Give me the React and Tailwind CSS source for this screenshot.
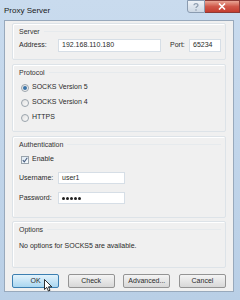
import React from 'react';

const font = { fontFamily: '"Liberation Sans", Arial, sans-serif' };

const Group = ({ title, className = '', children }) => (
  <div className={`mx-[7px] border border-[#dde3e8] rounded-[2px] shadow-[inset_1px_1px_0_#fff] ${className}`}>
    <div className="flex items-center gap-1 pl-[6px] pr-[4px] h-[12px] mt-[1px]">
      <span className="text-[#333] text-[7px] leading-none whitespace-nowrap">{title}</span>
      <div className="flex-1 h-px bg-[#e6eaed]" />
    </div>
    {children}
  </div>
);

const Radio = ({ checked, label }) => (
  <div className="flex items-center h-[15px] pl-[8px] gap-[3px]">
    <span className="w-[8px] h-[8px] rounded-full border border-[#9aa4ac] bg-gradient-to-br from-[#e2e2e2] to-[#fafafa] flex items-center justify-center">
      {checked && <span className="w-[4px] h-[4px] rounded-full bg-[#3b74a8]" />}
    </span>
    <span className="text-[7px] text-[#2a2a2a]">{label}</span>
  </div>
);

const Button = ({ label, active }) => (
  <div
    className={`w-[47px] h-[14px] rounded-[2px] border flex items-center justify-center text-[7px] text-[#2a2a2a] ${
      active
        ? 'border-[#3c7fb1] bg-gradient-to-b from-[#e3f3fc] to-[#a9d6f0]'
        : 'border-[#949494] bg-gradient-to-b from-[#f4f4f4] to-[#d8d8d8]'
    }`}
  >
    {label}
  </div>
);

export default function App() {
  return (
    <div
      className="w-[240px] h-[300px] relative overflow-hidden bg-gradient-to-b from-[#c9dbee] to-[#b9cfe6] flex flex-col"
      style={font}
    >
      {/* title bar */}
      <div className="h-[20px] flex items-start shrink-0">
        <span className="text-[8px] text-[#1a1a1a] mt-[5px] ml-[4px]">Proxy Server</span>
        <div className="ml-auto flex">
          <div className="w-[18px] h-[13px] border border-[#8a9bb0] rounded-bl-[3px] bg-gradient-to-b from-[#eef2f7] to-[#cdd8e4] flex items-center justify-center">
            <svg width="6" height="8" viewBox="0 0 6 8">
              <path d="M1 2.2C1 1 2 .6 3 .6S5 1.2 5 2.2C5 3.4 3 3.6 3 5" stroke="#8d9cae" strokeWidth="1.2" fill="none" />
              <circle cx="3" cy="7" r="0.8" fill="#8d9cae" />
            </svg>
          </div>
          <div className="w-[35px] h-[13px] border border-[#8c3a36] border-l-0 bg-gradient-to-b from-[#e8a595] via-[#d0584a] to-[#c43c2f] flex items-center justify-center">
            <svg width="8" height="7" viewBox="0 0 8 7">
              <path d="M1 .5L7 6.5M7 .5L1 6.5" stroke="#fff" strokeWidth="1.6" />
            </svg>
          </div>
        </div>
      </div>

      {/* client area */}
      <div className="ml-[4px] mr-[6px] h-[272px] bg-[#f0f0f0] border border-[#98a9bc] flex flex-col pt-[2px]">
        <Group title="Server" className="h-[37px]">
          <div className="flex items-center h-[15px] mt-[1px] pl-[6px] pr-[4px] text-[7px] text-[#2a2a2a]">
            <span className="w-[39px]">Address:</span>
            <div className="w-[103px] h-[13px] bg-white border border-[#d6dee6] flex items-center pl-[3px]">192.168.110.180</div>
            <span className="ml-[9px]">Port:</span>
            <div className="ml-auto w-[32px] h-[13px] bg-white border border-[#d6dee6] flex items-center pl-[3px]">65234</div>
          </div>
        </Group>

        <Group title="Protocol" className="h-[68px] mt-[4px]">
          <div className="mt-[2px] flex flex-col">
            <Radio checked label="SOCKS Version 5" />
            <Radio label="SOCKS Version 4" />
            <Radio label="HTTPS" />
          </div>
        </Group>

        <Group title="Authentication" className="h-[82px] mt-[4px]">
          <div className="flex items-center h-[15px] pl-[8px] gap-[3px] mt-[2px]">
            <span className="w-[8px] h-[8px] border border-[#9aa4ac] bg-gradient-to-br from-[#dfe9f3] to-[#f8fbfd] flex items-center justify-center">
              <svg width="6" height="6" viewBox="0 0 6 6">
                <path d="M.8 3.2L2.3 4.9L5.3.8" stroke="#4a5f80" strokeWidth="1.1" fill="none" />
              </svg>
            </span>
            <span className="text-[7px] text-[#2a2a2a]">Enable</span>
          </div>
          <div className="flex items-center h-[14px] mt-[4px] pl-[6px] text-[7px] text-[#2a2a2a]">
            <span className="w-[39px]">Username:</span>
            <div className="w-[67px] h-[12px] bg-white border border-[#d6dee6] flex items-center pl-[3px]">user1</div>
          </div>
          <div className="flex items-center h-[14px] mt-[6px] pl-[6px] text-[7px] text-[#2a2a2a]">
            <span className="w-[39px]">Password:</span>
            <div className="w-[67px] h-[12px] bg-white border border-[#d6dee6] flex items-center pl-[3px] gap-[1px]">
              {[0, 1, 2, 3, 4].map((i) => (
                <span key={i} className="w-[3px] h-[3px] rounded-full bg-[#222]" />
              ))}
            </div>
          </div>
        </Group>

        <Group title="Options" className="h-[47px] mt-[3px]">
          <div className="pl-[6px] mt-[6px] text-[7px] text-[#2a2a2a]">No options for SOCKS5 are available.</div>
        </Group>

        <div className="flex justify-between mx-[7px] mt-[6px]">
          <Button label="OK" active />
          <Button label="Check" />
          <Button label="Advanced..." />
          <Button label="Cancel" />
        </div>
      </div>

      {/* mouse cursor */}
      <svg className="absolute left-[44px] top-[279px]" width="9" height="13" viewBox="0 0 9 13">
        <path d="M.5.5V10.5L2.8 8.4L4.4 12L6 11.3L4.5 7.8H7.8Z" fill="#fff" stroke="#000" strokeWidth="0.8" strokeLinejoin="round" />
      </svg>
    </div>
  );
}
